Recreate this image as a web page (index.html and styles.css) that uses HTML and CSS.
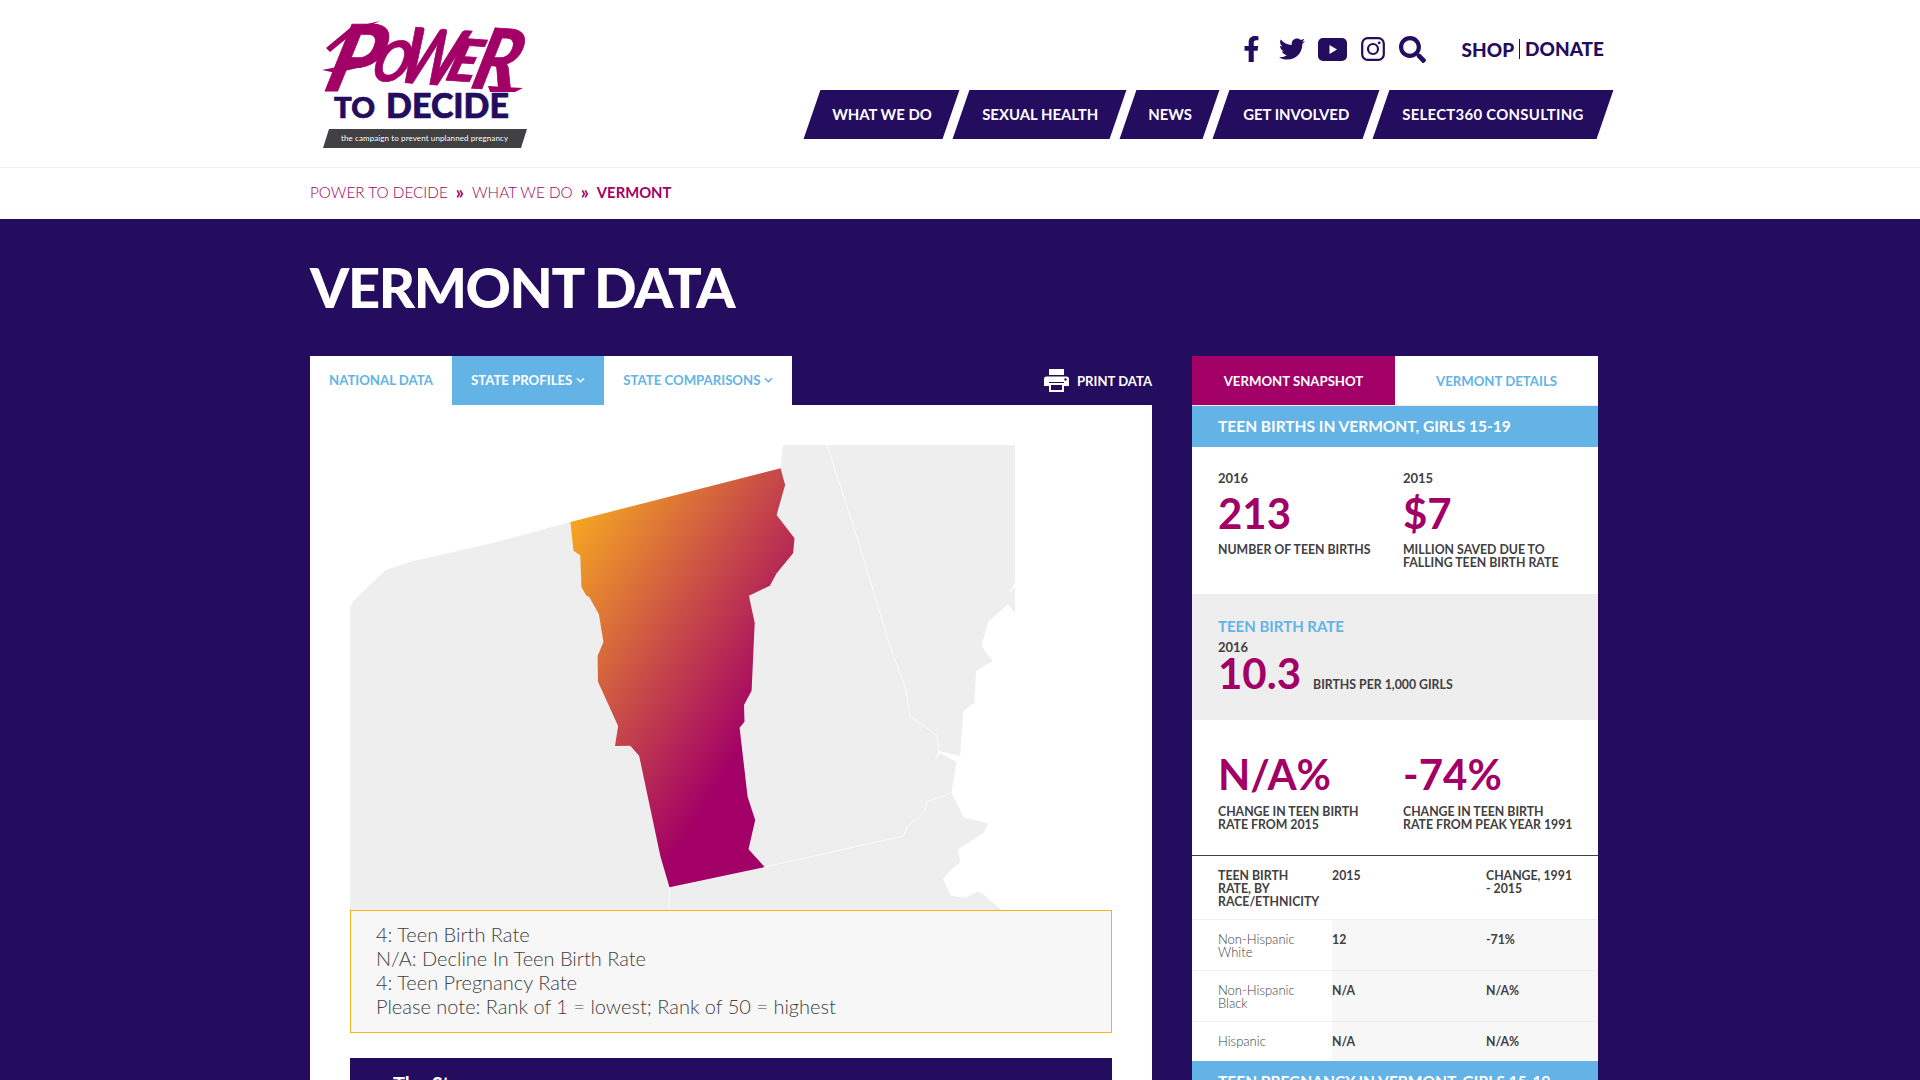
FILE: index.html
```html
<!DOCTYPE html>
<html lang="en">
<head>
  <meta charset="UTF-8">
  <title>Vermont Data - Power to Decide</title>
  <link rel="stylesheet" href="styles.css">
</head>
<body>

  <header class="site-header">
    <a class="logo" href="#">
      <svg width="230" height="167" viewBox="-12 -20 230 167">
        <g class="logo-power">
          <text transform="translate(0 71) skewX(-16)" font-size="92" textLength="52" lengthAdjust="spacingAndGlyphs">P</text>
          <text transform="translate(47 60) skewX(-14) rotate(4)" font-size="56" textLength="36" lengthAdjust="spacingAndGlyphs">O</text>
          <text transform="translate(73 62) skewX(-14) rotate(4)" font-size="76" textLength="58" lengthAdjust="spacingAndGlyphs">W</text>
          <text transform="translate(122 60) skewX(-14) rotate(4)" font-size="58" textLength="30" lengthAdjust="spacingAndGlyphs">E</text>
          <text transform="translate(147 68) skewX(-12) rotate(4)" font-size="84" textLength="45" lengthAdjust="spacingAndGlyphs">R</text>
          <polygon points="0,50 30,44 44,46 14,53" fill="#a20066"/>
          <polygon points="4,28 28,8 58,1 30,14 8,32" fill="#a20066"/>
          <polygon points="166,66 201,68 193,72 168,72" fill="#a20066"/>
        </g>
        <text class="logo-to" x="12" y="98" font-size="28" textLength="41" lengthAdjust="spacingAndGlyphs">TO</text>
        <text class="logo-to" x="64" y="98" font-size="35" textLength="123" lengthAdjust="spacingAndGlyphs">DECIDE</text>
        <polygon points="7,109 205,109 199,128 1,128" fill="#414042"/>
        <text class="logo-tag" x="19" y="121" font-size="8" textLength="167">the campaign to prevent unplanned pregnancy</text>
      </svg>
    </a>

    <div class="header-right">
      <div class="header-top">
        <svg class="icon icon-fb" viewBox="0 0 320 512"><path d="M279.14 288l14.22-92.66h-88.91v-60.13c0-25.35 12.42-50.06 52.24-50.06h40.42V6.26S260.43 0 225.36 0c-73.22 0-121.08 44.38-121.08 124.72v70.62H22.89V288h81.39v224h100.17V288z"/></svg>
        <svg class="icon icon-tw" viewBox="0 0 512 512"><path d="M459.37 151.716c.325 4.548.325 9.097.325 13.645 0 138.72-105.583 298.558-298.558 298.558-59.452 0-114.68-17.219-161.137-47.106 8.447.974 16.568 1.299 25.34 1.299 49.055 0 94.213-16.568 130.274-44.832-46.132-.975-84.792-31.188-98.112-72.772 6.498.974 12.995 1.624 19.818 1.624 9.421 0 18.843-1.3 27.614-3.573-48.081-9.747-84.143-51.98-84.143-102.985v-1.299c13.969 7.797 30.214 12.67 47.431 13.319-28.264-18.843-46.781-51.005-46.781-87.391 0-19.492 5.197-37.36 14.294-52.954 51.655 63.675 129.3 105.258 216.365 109.807-1.624-7.797-2.599-15.918-2.599-24.04 0-57.828 46.782-104.934 104.934-104.934 30.213 0 57.502 12.67 76.67 33.137 23.715-4.548 46.456-13.32 66.599-25.34-7.798 24.366-24.366 44.833-46.132 57.827 21.117-2.273 41.584-8.122 60.426-16.243-14.292 20.791-32.161 39.308-52.628 54.253z"/></svg>
        <svg class="icon icon-yt" viewBox="0 0 29 23"><rect width="29" height="23" rx="5"/><polygon points="11.5,7 19,11.5 11.5,16" fill="#fff"/></svg>
        <svg class="icon icon-ig" viewBox="0 0 24 24"><rect x="1.2" y="1.2" width="21.6" height="21.6" rx="5.5" fill="none" stroke="#240c5f" stroke-width="2.2"/><circle cx="12" cy="12" r="5" fill="none" stroke="#240c5f" stroke-width="2.2"/><circle cx="18.2" cy="5.8" r="1.4"/></svg>
        <svg class="icon icon-search" viewBox="0 0 512 512"><path d="M505 442.7L405.3 343c-4.5-4.5-10.6-7-17-7H372c27.6-35.3 44-79.7 44-128C416 93.1 322.9 0 208 0S0 93.1 0 208s93.1 208 208 208c48.3 0 92.7-16.4 128-44v16.3c0 6.4 2.5 12.5 7 17l99.7 99.7c9.4 9.4 24.6 9.4 33.9 0l28.3-28.3c9.4-9.4 9.4-24.6.1-34zM208 336c-70.7 0-128-57.2-128-128 0-70.7 57.2-128 128-128 70.7 0 128 57.2 128 128 0 70.7-57.2 128-128 128z"/></svg>
        <div class="shop-links"><a href="#">SHOP</a><a href="#">DONATE</a></div>
      </div>
      <nav class="main-nav">
        <a class="nav-what" href="#"><span>WHAT WE DO</span></a>
        <a class="nav-sexual" href="#"><span>SEXUAL HEALTH</span></a>
        <a class="nav-news" href="#"><span>NEWS</span></a>
        <a class="nav-involved" href="#"><span>GET INVOLVED</span></a>
        <a class="nav-select" href="#"><span>SELECT360 CONSULTING</span></a>
      </nav>
    </div>
  </header>

  <div class="breadcrumb">
    <a href="#">POWER TO DECIDE</a>
    <span class="sep">»</span>
    <a href="#">WHAT WE DO</a>
    <span class="sep">»</span>
    <strong>VERMONT</strong>
  </div>

  <main class="content">
    <h1>VERMONT DATA</h1>

    <div class="columns">
      <section class="left-col">
        <div class="left-tabs">
          <div class="tab-group">
            <a class="tab tab-national" href="#">NATIONAL DATA</a>
            <a class="tab tab-active tab-profiles" href="#">STATE PROFILES
              <svg class="chev" viewBox="0 0 10 6"><path d="M1 1l4 4 4-4"/></svg>
            </a>
            <a class="tab tab-compare" href="#">STATE COMPARISONS
              <svg class="chev" viewBox="0 0 10 6"><path d="M1 1l4 4 4-4"/></svg>
            </a>
          </div>
          <a class="print" href="#">
            <svg width="25" height="23" viewBox="0 0 25 23">
              <path fill="#fff" d="M5 0h15v6H5zM2.5 7.500h20A2.500 2.500 0 0 1 25 10v7h-5v-4H5v4H0v-7a2.500 2.500 0 0 1 2.500-2.500z"/>
              <path fill="#fff" d="M5 14h15v9H5zM7 16v5h11v-5z" fill-rule="evenodd"/>
              <circle cx="21.500" cy="10.500" r="1.200" fill="#240c5f"/>
            </svg>
            PRINT DATA
          </a>
        </div>

        <div class="panel">
          <svg class="map" width="762" height="465" viewBox="0 0 762 465">
            <defs>
              <linearGradient id="vtFill" gradientUnits="userSpaceOnUse" x1="222" y1="80" x2="445" y2="220">
                <stop offset="0" stop-color="#f5a623"/>
                <stop offset="1" stop-color="#a20066"/>
              </linearGradient>
            </defs>
            <polygon fill="#eee" points="0,465 0,162 4.300,155 35.500,125 63.700,116 141.800,98.300 220.400,77 430.600,23.300 432.900,0 665,0 665,136.700 658.800,149 665,141.700 665,167.700 657.900,159.300 638.200,176.700 631.500,201 642.700,216 626.200,226 624.400,257.700 613.200,266 610.100,311 589.100,306 584.200,315.700 590.400,308.300 606.500,317 601.600,347.700 614.100,372.700 638.200,378.300 633.800,387.700 607.900,404.300 610.500,417.300 600.700,425 593.100,434.300 601.100,450.700 615,453 627.500,446.700 632.900,449 651.600,465"/>
            <g class="state-lines">
              <polyline points="477,0 507.900,95 539.100,198.300 555.600,243.300 560.100,271 586.900,290.700 589.100,306"/>
              <polyline points="414.600,422 553.400,391 557,381.700 574.800,366.700 577,356.700 601.600,347.700"/>
              <polyline points="319.500,442.300 319,465"/>
            </g>
            <polygon fill="url(#vtFill)" points="430.600,23.300 435.100,40 426.600,70 444.500,93.300 443.100,108.300 426.600,128.300 419.900,140.700 398.900,150.700 404.700,177.700 401.600,245.700 394,260 394.500,276.700 389.600,282.700 397.600,351.700 405.200,375 398.500,404.300 414.600,422 319.500,442.300 310.500,411.700 289.100,310.700 280.200,300.700 265,301 268.100,281 248,236.700 247.600,211 253.400,197 248.900,169.300 239.100,151.700 236.400,150.700 231.500,142.300 230.200,110.300 223.500,105.700 220.400,77"/>
          </svg>

          <div class="rank-box">
            <p>4: Teen Birth Rate</p>
            <p>N/A: Decline In Teen Birth Rate</p>
            <p>4: Teen Pregnancy Rate</p>
            <p>Please note: Rank of 1 = lowest; Rank of 50 = highest</p>
          </div>

          <div class="story">
            <h3>The Story</h3>
          </div>
        </div>
      </section>

      <aside class="right-col">
        <div class="side-tabs">
          <a class="side-tab side-tab-active" href="#">VERMONT SNAPSHOT</a>
          <a class="side-tab" href="#">VERMONT DETAILS</a>
        </div>

        <h2 class="band">TEEN BIRTHS IN VERMONT, GIRLS 15-19</h2>

        <div class="stats stats-first">
          <div class="stat">
            <div class="stat-year">2016</div>
            <div class="stat-num">213</div>
            <div class="stat-label">NUMBER OF TEEN BIRTHS</div>
          </div>
          <div class="stat">
            <div class="stat-year">2015</div>
            <div class="stat-num">$7</div>
            <div class="stat-label">MILLION SAVED DUE TO<br>FALLING TEEN BIRTH RATE</div>
          </div>
        </div>

        <div class="rate">
          <h4>TEEN BIRTH RATE</h4>
          <div class="stat-year">2016</div>
          <div class="rate-line">
            <span class="stat-num">10.3</span>
            <span class="stat-label">BIRTHS PER 1,000 GIRLS</span>
          </div>
        </div>

        <div class="stats stats-second">
          <div class="stat">
            <div class="stat-num">N/A%</div>
            <div class="stat-label">CHANGE IN TEEN BIRTH<br>RATE FROM 2015</div>
          </div>
          <div class="stat">
            <div class="stat-num">-74%</div>
            <div class="stat-label">CHANGE IN TEEN BIRTH<br>RATE FROM PEAK YEAR 1991</div>
          </div>
        </div>

        <div class="race-table">
          <div class="race-row race-head">
            <div>TEEN BIRTH RATE, BY RACE/ETHNICITY</div>
            <div>2015</div>
            <div class="race-change">CHANGE, 1991 - 2015</div>
          </div>
          <div class="race-row race-tall">
            <div>Non-Hispanic White</div>
            <div>12</div>
            <div>-71%</div>
          </div>
          <div class="race-row race-tall">
            <div>Non-Hispanic Black</div>
            <div>N/A</div>
            <div>N/A%</div>
          </div>
          <div class="race-row race-short">
            <div>Hispanic</div>
            <div>N/A</div>
            <div>N/A%</div>
          </div>
        </div>

        <h2 class="band">TEEN PREGNANCY IN VERMONT, GIRLS 15-19</h2>
      </aside>
    </div>
  </main>

</body>
</html>
```

FILE: styles.css
```css
* {
  box-sizing: border-box;
}
body {
  margin: 0;
  height: 1080px;
  overflow: hidden;
  font-family: Lato, "Open Sans", sans-serif;
  background: #240c5f;
  color: #414042;
}
a {
  text-decoration: none;
  color: inherit;
}

/* header */
.site-header {
  display: flex;
  justify-content: space-between;
  height: 168px;
  padding: 0 315px 0 310px;
  background: white;
  border-bottom: 1px solid #eee;
}
.logo svg {
  display: block;
  overflow: visible;
}
.logo-power text {
  font-weight: 900;
  font-style: italic;
  fill: #a20066;
  stroke: #a20066;
  stroke-width: 0.8;
}
.logo-to {
  font-weight: 900;
  fill: #240c5f;
  stroke: #240c5f;
  stroke-width: 0.7;
}
.logo-tag {
  font-weight: 400;
  fill: white;
}
.header-right {
  display: flex;
  flex-direction: column;
  align-items: flex-end;
}
.header-top {
  display: flex;
  align-items: center;
  height: 26px;
  margin-top: 36px;
  padding-right: 1px;
}
.icon {
  display: block;
  fill: #240c5f;
}
.icon-fb {
  width: 17px;
  height: 26px;
  margin-right: 19px;
}
.icon-tw {
  width: 26px;
  height: 26px;
  margin-right: 13px;
}
.icon-yt {
  width: 29px;
  height: 23px;
  margin-right: 14px;
}
.icon-ig {
  width: 24px;
  height: 24px;
  margin-right: 14px;
}
.icon-search {
  width: 27px;
  height: 27px;
  margin-right: 36px;
}
.shop-links {
  display: flex;
  align-items: center;
  font-size: 19px;
  font-weight: 900;
  color: #240c5f;
}
.shop-links a + a {
  margin-left: 5px;
  padding-left: 5px;
  border-left: 1px solid #240c5f;
  line-height: 20px;
}
.main-nav {
  display: flex;
  gap: 10px;
  margin-top: 28px;
}
.main-nav a {
  display: flex;
  align-items: center;
  justify-content: center;
  height: 49px;
  padding-bottom: 2px;
  background: #240c5f;
  transform: skewX(-19deg);
  color: white;
  font-size: 14.9px;
  font-weight: 700;
}
.main-nav span {
  transform: skewX(19deg);
}
.nav-what { width: 139px; }
.nav-sexual { width: 157px; }
.nav-news { width: 83px; }
.nav-involved { width: 150px; }
.nav-select {
  width: 224px;
  letter-spacing: 0.3px;
}

/* breadcrumb */
.breadcrumb {
  display: flex;
  align-items: center;
  height: 51px;
  padding: 0 0 3px 310px;
  background: white;
  color: #a20066;
  font-size: 15.3px;
  font-weight: 300;
}
.breadcrumb .sep {
  margin: 0 8px;
  font-size: 18px;
  font-weight: 700;
}
.breadcrumb strong {
  font-size: 14.8px;
  font-weight: 700;
}

/* main */
.content {
  padding: 0 0 0 310px;
}
h1 {
  margin: 0;
  padding-top: 32px;
  height: 137px;
  color: white;
  font-size: 56px;
  line-height: 72px;
  font-weight: 900;
  letter-spacing: -1.4px;
}
.columns {
  display: flex;
  gap: 40px;
}

/* left column */
.left-col {
  width: 842px;
}
.left-tabs {
  display: flex;
  justify-content: space-between;
  align-items: center;
  height: 49px;
}
.tab-group {
  display: flex;
  height: 100%;
  background: white;
}
.tab {
  display: flex;
  align-items: center;
  gap: 4px;
  padding: 0 19px 2px;
  color: #63b3e6;
  font-size: 13.2px;
  font-weight: 700;
}
.tab-active {
  background: #63b3e6;
  color: white;
}
.chev {
  width: 9px;
  height: 6px;
  fill: none;
  stroke: currentColor;
  stroke-width: 1.6;
}
.print {
  display: flex;
  align-items: center;
  gap: 8px;
  color: white;
  font-size: 13.1px;
  font-weight: 700;
}
.panel {
  padding: 40px 40px 0;
  background: white;
}
.map {
  display: block;
}
.state-lines polyline {
  fill: none;
  stroke: white;
  stroke-width: 0.8;
}
.rank-box {
  height: 123px;
  padding: 11px 25px;
  background: #f7f7f7;
  border: 1px solid #f9b21d;
  font-size: 20px;
  line-height: 24px;
  font-weight: 300;
}
.rank-box p {
  margin: 0;
}
.story {
  margin-top: 25px;
  height: 200px;
  padding: 14px 43px;
  background: #240c5f;
}
.story h3 {
  margin: 0;
  color: white;
  font-size: 20px;
  font-weight: 700;
}

/* right column */
.right-col {
  width: 406px;
  background: white;
}
.side-tabs {
  display: flex;
  height: 50px;
  border-bottom: 1px solid #eee;
}
.side-tab {
  display: flex;
  align-items: center;
  justify-content: center;
  width: 203px;
  color: #63b3e6;
  font-size: 13.2px;
  font-weight: 700;
}
.side-tab-active {
  background: #a20066;
  color: white;
}
.band {
  margin: 0;
  height: 41px;
  padding: 0 26px;
  background: #63b3e6;
  color: white;
  font-size: 15.5px;
  line-height: 41px;
  font-weight: 700;
}
.stats {
  display: flex;
  padding-left: 26px;
}
.stat {
  width: 185px;
}
.stats-first {
  height: 147px;
  padding-top: 24px;
}
.stats-first .stat-year {
  margin-bottom: 2px;
}
.stats-second {
  height: 136px;
  padding-top: 28px;
  border-bottom: 1px solid #414042;
}
.stats-second .stat-label {
  margin-top: 5px;
}
.stat-year {
  font-size: 13px;
  line-height: 14px;
  font-weight: 700;
}
.stat-num {
  display: block;
  color: #a20066;
  font-size: 42px;
  line-height: 52px;
  font-weight: 700;
}
.stat-label {
  margin-top: 4px;
  font-size: 12.3px;
  line-height: 13px;
  font-weight: 700;
}
.rate {
  height: 126px;
  padding: 22px 26px 0;
  background: #eee;
}
.rate h4 {
  margin: 0 0 4px;
  color: #63b3e6;
  font-size: 15px;
  line-height: 20px;
  font-weight: 700;
}
.rate-line {
  display: flex;
  align-items: baseline;
  gap: 12px;
  margin-top: 1px;
}
.rate-line .stat-num {
  line-height: 36px;
}
.rate-line .stat-label {
  margin: 0;
}
.race-row {
  display: grid;
  grid-template-columns: 140px 154px 112px;
  border-bottom: 1px solid #eee;
  font-size: 12.3px;
  line-height: 13px;
  font-weight: 700;
}
.race-row > div {
  padding: 13px 14px 0 0;
}
.race-row > div:first-child {
  padding-left: 26px;
}
.race-row > .race-change {
  padding-right: 24px;
}
.race-head {
  height: 64px;
}
.race-tall {
  height: 51px;
}
.race-short {
  height: 39px;
  border-bottom: 0;
}
.race-tall > div:first-child,
.race-short > div:first-child {
  font-size: 13px;
  font-weight: 300;
}
.race-tall > div:not(:first-child),
.race-short > div:not(:first-child) {
  background: #f7f7f7;
}
```
